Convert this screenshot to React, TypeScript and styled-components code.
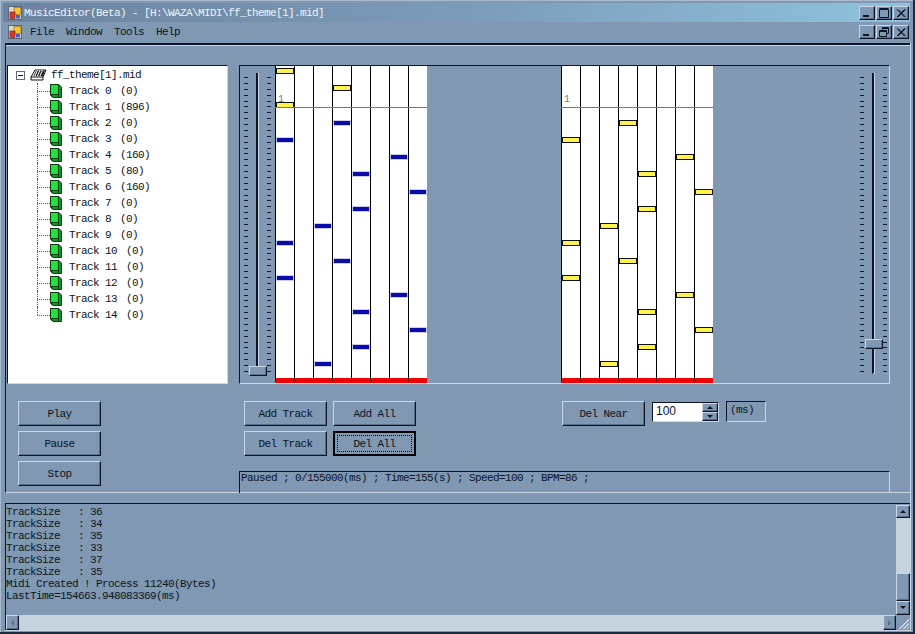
import styled, { createGlobalStyle, css } from "styled-components";

const GlobalStyle = createGlobalStyle`
  html, body {
    margin: 0;
    padding: 0;
    background: #8098b2;
  }
`;

const LIGHT = "#c9d7e6";
const DARK = "#0c1628";
const FACE = "#8098b2";
const SHADE = "#5a6e88";

const raised = css`
  border: 1px solid;
  border-color: ${LIGHT} ${DARK} ${DARK} ${LIGHT};
  box-shadow: inset -1px -1px 0 ${SHADE};
  box-sizing: border-box;
  background: ${FACE};
`;

const sunken = css`
  border: 1px solid;
  border-color: ${DARK} ${LIGHT} ${LIGHT} ${DARK};
  box-sizing: border-box;
`;

const Desktop = styled.div`
  width: 915px;
  height: 634px;
  box-sizing: border-box;
  padding: 3px 2px 1px 3px;
  display: flex;
  flex-direction: column;
  overflow: hidden;
  background: ${FACE};
  border-right: 2px solid #1c2a40;
  border-bottom: 2px solid #1c2a40;
  box-shadow: inset 1px 1px 0 #a9bace;
  font-family: "Liberation Mono", "DejaVu Sans Mono", monospace;
  font-size: 11px;
  letter-spacing: -0.6px;
  color: #0b1424;
  white-space: pre;
`;

const TitleBar = styled.div`
  height: 19px;
  flex: none;
  display: flex;
  align-items: center;
  padding: 0 1px 0 5px;
  gap: 2px;
  margin-right: 1px;
  background: linear-gradient(to right, #6c83a0 0%, #7b9bb8 50%, #8fc3dc 100%);
`;

const TitleText = styled.span`
  color: #f1f5f8;
  flex: 1;
`;

const MenuBar = styled.div`
  height: 19px;
  flex: none;
  display: flex;
  align-items: center;
  padding: 0 1px 0 5px;
  margin-right: 1px;
`;

const MenuItems = styled.div`
  display: flex;
  flex: 1;
  padding-left: 2px;
`;

const MenuItem = styled.span`
  padding: 0 6px;
`;

const WindowButtons = styled.div`
  display: flex;
  gap: 1px;
`;

const CaptionButton = styled.div`
  ${raised};
  width: 16px;
  height: 14px;
  display: flex;
  align-items: center;
  justify-content: center;
`;

const Client = styled.div`
  flex: 1;
  min-height: 0;
  margin: 2px 0 0 2px;
  display: flex;
  flex-direction: column;
  border-right: 1px solid ${LIGHT};
  border-bottom: 1px solid ${LIGHT};
`;

const UpperPanel = styled.div`
  height: 450px;
  flex: none;
  box-sizing: border-box;
  border-top: 2px solid ${DARK};
  border-left: 1px solid ${DARK};
  border-bottom: 1px solid ${LIGHT};
  box-shadow: inset 0 1px 0 ${LIGHT};
  padding: 20px 19px 0 1px;
`;

const TopRow = styled.div`
  display: flex;
  gap: 11px;
  height: 319px;
`;

const Tree = styled.div`
  width: 221px;
  box-sizing: border-box;
  border: 1px solid;
  border-color: ${DARK} ${LIGHT} ${LIGHT} ${DARK};
  background: #fff;
  padding: 1px 0 0 8px;
`;

const TreeRoot = styled.div`
  height: 16px;
  display: flex;
  align-items: center;
`;

const Expander = styled.div`
  width: 9px;
  height: 9px;
  box-sizing: border-box;
  border: 1px solid #59687c;
  position: relative;
  margin-right: 5px;
  &::after {
    content: "";
    position: absolute;
    left: 1px;
    right: 1px;
    top: 3px;
    height: 1px;
    background: #111;
  }
`;

const TreeLabel = styled.span`
  margin-left: 4px;
`;

const TreeRow = styled.div`
  height: 16px;
  display: flex;
  align-items: center;
  margin-left: 21px;
`;

const Branch = styled.div<{ $last: boolean }>`
  width: 13px;
  height: 16px;
  flex: none;
  position: relative;
  &::before {
    content: "";
    position: absolute;
    left: 0;
    top: 0;
    height: ${(p) => (p.$last ? "8px" : "16px")};
    border-left: 1px dotted #52606f;
  }
  &::after {
    content: "";
    position: absolute;
    left: 0;
    right: 0;
    top: 8px;
    border-top: 1px dotted #52606f;
  }
`;

const TrackLine = styled.span`
  margin-left: 7px;
`;

const TrackCount = styled.span`
  margin-left: 9px;
`;

const RollGroup = styled.div`
  ${sunken};
  width: 651px;
  display: flex;
`;

const SliderBody = styled.div`
  width: 35px;
  height: 100%;
  flex: none;
  position: relative;
  display: flex;
  justify-content: center;
  gap: 8px;
  padding-top: 11px;
  box-sizing: border-box;
`;

const RightSlider = styled(SliderBody)`
  margin-left: auto;
  padding-left: 4px;
`;

const Ticks = styled.div`
  width: 4px;
  height: 295px;
  background: repeating-linear-gradient(
    to bottom,
    #101a2c 0,
    #101a2c 1px,
    transparent 1px,
    transparent 5.88px
  );
`;

const SliderTrack = styled.div`
  width: 3px;
  height: 301px;
  margin-top: -4px;
  box-sizing: border-box;
  border-left: 2px solid ${DARK};
  border-right: 1px solid ${LIGHT};
  border-bottom: 1px solid ${LIGHT};
`;

const Thumb = styled.div<{ $top: number; $left: number }>`
  ${raised};
  position: absolute;
  left: ${(p) => p.$left}px;
  top: ${(p) => p.$top}px;
  width: 18px;
  height: 10px;
`;

const Roll = styled.div<{ $left?: number }>`
  width: 152px;
  height: 100%;
  flex: none;
  margin-left: ${(p) => p.$left ?? 0}px;
  display: flex;
  position: relative;
  background: #fff;
  box-sizing: border-box;
`;

const Lane = styled.div`
  width: 19px;
  flex: none;
  position: relative;
  border-left: 1px solid #000;
  border-bottom: 5px solid #f00000;
  box-sizing: border-box;
`;

const Note = styled.div<{ $top: number; $tone: "yellow" | "blue" }>`
  position: absolute;
  left: 0;
  right: 0;
  top: ${(p) => p.$top}px;
  box-sizing: border-box;
  ${(p) =>
    p.$tone === "yellow"
      ? css`
          height: 6px;
          margin-top: -2px;
          background: #fff24a;
          border: 1px solid #111;
        `
      : css`
          height: 4px;
          margin-top: -1px;
          background: #0a0ca8;
          box-shadow: 0 0 0 1px #c9cdf0;
          margin-left: 1px;
          margin-right: 1px;
        `}
`;

const HitLine = styled.div`
  position: absolute;
  left: 0;
  right: 0;
  top: 41px;
  height: 1px;
  background: #777;
`;

const HitLabel = styled.span`
  position: absolute;
  left: 3px;
  top: 28px;
  font-size: 10px;
  color: #777;
`;

const BottomRow = styled.div`
  display: flex;
  padding-top: 17px;
`;

const TransportColumn = styled.div`
  width: 221px;
  padding-left: 11px;
  box-sizing: content-box;
  display: flex;
  flex-direction: column;
  gap: 5px;
`;

const ActionColumn = styled.div`
  display: flex;
  flex-direction: column;
  width: 651px;
`;

const ActionRow = styled.div`
  display: flex;
  align-items: flex-start;
  padding-left: 5px;
`;

const TrackButtons = styled.div`
  display: grid;
  grid-template-columns: 83px 83px;
  gap: 5px 6px;
`;

const NearGroup = styled.div`
  display: flex;
  margin-left: 146px;
  align-items: flex-start;
`;

const Button = styled.div<{ $focused?: boolean }>`
  ${raised};
  width: 83px;
  height: 25px;
  display: flex;
  align-items: center;
  justify-content: center;
  ${(p) =>
    p.$focused &&
    css`
      border: 2px solid #000;
      box-shadow: none;
      position: relative;
      &::after {
        content: "";
        position: absolute;
        inset: 2px;
        border: 1px dotted #000;
      }
    `}
`;

const Spinner = styled.div`
  ${sunken};
  width: 67px;
  height: 20px;
  margin: 1px 0 0 7px;
  background: #fff;
  display: flex;
  justify-content: space-between;
  font-family: "Liberation Sans", Arial, sans-serif;
  font-size: 12px;
  letter-spacing: 0;
  line-height: 17px;
  padding-left: 3px;
`;

const SpinArrows = styled.div`
  width: 16px;
  display: flex;
  flex-direction: column;
  background: ${FACE};
`;

const SpinButton = styled.div`
  ${raised};
  flex: 1;
  display: flex;
  align-items: center;
  justify-content: center;
`;

const UnitLabel = styled.div`
  ${sunken};
  width: 40px;
  height: 21px;
  margin-left: 7px;
  padding: 2px 0 0 3px;
`;

const StatusLabel = styled.div`
  ${sunken};
  height: 22px;
  margin-top: 15px;
  border-bottom: none;
  padding: 0 0 0 1px;
  line-height: 13px;
`;

const LogBox = styled.div`
  flex: 1;
  min-height: 0;
  margin-top: 10px;
  display: grid;
  grid-template-columns: 1fr 14px;
  grid-template-rows: 1fr 15px;
  border-top: 1px solid ${DARK};
  border-left: 1px solid ${DARK};
`;

const LogText = styled.div`
  padding: 2px 0 0 0;
  line-height: 12px;
`;

const VerticalBar = styled.div`
  display: flex;
  flex-direction: column;
  padding-top: 1px;
`;

const ScrollButton = styled.div<{ $w: number; $h: number }>`
  ${raised};
  width: ${(p) => p.$w}px;
  height: ${(p) => p.$h}px;
  flex: none;
  display: flex;
  align-items: center;
  justify-content: center;
`;

const ScrollTrack = styled.div`
  flex: 1;
  background: #c5d3df;
`;

const VThumb = styled.div`
  ${raised};
  height: 28px;
  flex: none;
`;

const HorizontalBar = styled.div`
  display: flex;
`;

const Grip = styled.div`
  display: flex;
  align-items: flex-end;
  justify-content: flex-end;
`;

const PopIcon = () => (
  <svg width="14" height="14" viewBox="0 0 14 14">
    <rect x="0.5" y="0.5" width="13" height="13" fill="#d9d9c8" stroke="#59637a" />
    <rect x="6" y="1.5" width="7" height="7" fill="#f2c230" stroke="#8a6a10" strokeWidth="0.6" />
    <rect x="2" y="6" width="5" height="6.5" fill="#d43a2a" stroke="#6a1c14" strokeWidth="0.6" />
    <rect x="8" y="9" width="4" height="3.5" fill="#3e62c8" />
  </svg>
);

const MinIcon = () => (
  <svg width="10" height="10" viewBox="0 0 10 10">
    <rect x="1" y="7" width="6" height="2" fill="#0c1628" />
  </svg>
);

const MaxIcon = () => (
  <svg width="10" height="10" viewBox="0 0 10 10">
    <path d="M0.5 1.5H9.5V9.5H0.5Z M0.5 0.5H9.5" fill="none" stroke="#0c1628" />
  </svg>
);

const RestoreIcon = () => (
  <svg width="10" height="10" viewBox="0 0 10 10">
    <path d="M3.5 2.5V0.5H9.5V6.5H7.5 M3.5 1.5H9.5 M0.5 3.5H7.5V9.5H0.5Z M0.5 4.5H7.5" fill="none" stroke="#0c1628" />
  </svg>
);

const CloseIcon = () => (
  <svg width="10" height="10" viewBox="0 0 10 10">
    <path d="M1 1.5L8.5 9 M2 1.5L9.5 9 M8.5 1.5L1 9 M9.5 1.5L2 9" stroke="#0c1628" fill="none" />
  </svg>
);

const PianoIcon = () => (
  <svg width="17" height="12" viewBox="0 0 17 12">
    <path d="M5 1H16L13 8V11H1V8Z" fill="#fff" stroke="#111" />
    <path d="M6 1.5H15L13 7H3.5Z" fill="#222" />
    <path d="M7.5 1L5 7 M10 1L7.5 7 M12.5 1L10 7" stroke="#fff" />
    <path d="M1 8H13" stroke="#111" />
  </svg>
);

const BookIcon = () => (
  <svg width="12" height="14" viewBox="0 0 12 14">
    <path d="M0.5 0.5H8.5L11.5 3V13.5H3L0.5 11Z" fill="#0a9a22" stroke="#0b3a10" />
    <path d="M0.5 0.5H8.5V10.5H0.5Z" fill="#20e03a" stroke="#0b3a10" />
    <path d="M0.5 10.5L3 13.5 M8.5 10.5V13" stroke="#0b3a10" fill="none" />
  </svg>
);

const Arrow = ({ dir, size = 3 }: { dir: "up" | "down" | "left" | "right"; size?: number }) => {
  const paths = {
    up: "M3 1L6 4H0Z",
    down: "M0 1H6L3 4Z",
    left: "M4 0V6L1 3Z",
    right: "M1 0V6L4 3Z",
  };
  return (
    <svg width={size * 2} height={size * 2} viewBox="0 0 6 6">
      <path d={paths[dir]} fill={dir === "right" || dir === "left" ? "#5a6e88" : "#0c1628"} />
    </svg>
  );
};

const GripIcon = () => (
  <svg width="13" height="13" viewBox="0 0 13 13">
    <path d="M12 2L2 12 M12 3L3 12 M12 6L6 12 M12 7L7 12 M12 10L10 12" stroke="#c9d7e6" />
  </svg>
);

const tracks: [string, number][] = [
  ["Track 0", 0],
  ["Track 1", 896],
  ["Track 2", 0],
  ["Track 3", 0],
  ["Track 4", 160],
  ["Track 5", 80],
  ["Track 6", 160],
  ["Track 7", 0],
  ["Track 8", 0],
  ["Track 9", 0],
  ["Track 10", 0],
  ["Track 11", 0],
  ["Track 12", 0],
  ["Track 13", 0],
  ["Track 14", 0],
];

// note positions per lane, relative to the roll's top
const laneNotes: number[][] = [
  [73, 176, 211],
  [],
  [159, 297],
  [56, 194],
  [107, 142, 245, 280],
  [],
  [90, 228],
  [125, 263],
];

const pendingNotes: number[][] = [[4, 38], [], [], [21], [], [], [], []];

const logLines = [
  "TrackSize   : 36",
  "TrackSize   : 34",
  "TrackSize   : 35",
  "TrackSize   : 33",
  "TrackSize   : 37",
  "TrackSize   : 35",
  "Midi Created ! Process 11240(Bytes)",
  "LastTime=154663.948083369(ms)",
];

export default function App() {
  return (
    <>
      <GlobalStyle />
      <Desktop>
        <TitleBar>
          <PopIcon />
          <TitleText>{"MusicEditor(Beta) - [H:\\WAZA\\MIDI\\ff_theme[1].mid]"}</TitleText>
          <WindowButtons>
            <CaptionButton><MinIcon /></CaptionButton>
            <CaptionButton><MaxIcon /></CaptionButton>
            <CaptionButton><CloseIcon /></CaptionButton>
          </WindowButtons>
        </TitleBar>
        <MenuBar>
          <PopIcon />
          <MenuItems>
            <MenuItem>File</MenuItem>
            <MenuItem>Window</MenuItem>
            <MenuItem>Tools</MenuItem>
            <MenuItem>Help</MenuItem>
          </MenuItems>
          <WindowButtons>
            <CaptionButton><MinIcon /></CaptionButton>
            <CaptionButton><RestoreIcon /></CaptionButton>
            <CaptionButton><CloseIcon /></CaptionButton>
          </WindowButtons>
        </MenuBar>
        <Client>
          <UpperPanel>
            <TopRow>
              <Tree>
                <TreeRoot>
                  <Expander />
                  <PianoIcon />
                  <TreeLabel>ff_theme[1].mid</TreeLabel>
                </TreeRoot>
                {tracks.map(([name, size], i) => (
                  <TreeRow key={name}>
                    <Branch $last={i === tracks.length - 1} />
                    <BookIcon />
                    <TrackLine>
                      {name}
                      <TrackCount>({size})</TrackCount>
                    </TrackLine>
                  </TreeRow>
                ))}
              </Tree>
              <RollGroup>
                <SliderBody>
                  <Ticks />
                  <SliderTrack />
                  <Ticks />
                  <Thumb $top={300} $left={9} />
                </SliderBody>
                <Roll>
                  {laneNotes.map((notes, lane) => (
                    <Lane key={lane}>
                      {pendingNotes[lane].map((y) => (
                        <Note key={y} $top={y} $tone="yellow" />
                      ))}
                      {notes.map((y) => (
                        <Note key={y} $top={y} $tone="blue" />
                      ))}
                    </Lane>
                  ))}
                  <HitLine />
                  <HitLabel>1</HitLabel>
                </Roll>
                <Roll $left={134}>
                  {laneNotes.map((notes, lane) => (
                    <Lane key={lane}>
                      {notes.map((y) => (
                        <Note key={y} $top={y} $tone="yellow" />
                      ))}
                    </Lane>
                  ))}
                  <HitLine />
                  <HitLabel>1</HitLabel>
                </Roll>
                <RightSlider>
                  <Ticks />
                  <SliderTrack />
                  <Ticks />
                  <Thumb $top={273} $left={11} />
                </RightSlider>
              </RollGroup>
            </TopRow>
            <BottomRow>
              <TransportColumn>
                <Button>Play</Button>
                <Button>Pause</Button>
                <Button>Stop</Button>
              </TransportColumn>
              <ActionColumn>
                <ActionRow>
                  <TrackButtons>
                    <Button>Add Track</Button>
                    <Button>Add All</Button>
                    <Button>Del Track</Button>
                    <Button $focused>Del All</Button>
                  </TrackButtons>
                  <NearGroup>
                    <Button>Del Near</Button>
                    <Spinner>
                      100
                      <SpinArrows>
                        <SpinButton><Arrow dir="up" /></SpinButton>
                        <SpinButton><Arrow dir="down" /></SpinButton>
                      </SpinArrows>
                    </Spinner>
                    <UnitLabel>(ms)</UnitLabel>
                  </NearGroup>
                </ActionRow>
                <StatusLabel>Paused ; 0/155000(ms) ; Time=155(s) ; Speed=100 ; BPM=86 ;</StatusLabel>
              </ActionColumn>
            </BottomRow>
          </UpperPanel>
          <LogBox>
            <LogText>
              {logLines.map((line, i) => (
                <div key={i}>{line}</div>
              ))}
            </LogText>
            <VerticalBar>
              <ScrollButton $w={14} $h={13}><Arrow dir="up" /></ScrollButton>
              <ScrollTrack />
              <VThumb />
              <ScrollButton $w={14} $h={14}><Arrow dir="down" /></ScrollButton>
            </VerticalBar>
            <HorizontalBar>
              <ScrollButton $w={13} $h={15}><Arrow dir="left" /></ScrollButton>
              <ScrollTrack />
              <ScrollButton $w={13} $h={15}><Arrow dir="right" /></ScrollButton>
            </HorizontalBar>
            <Grip><GripIcon /></Grip>
          </LogBox>
        </Client>
      </Desktop>
    </>
  );
}
